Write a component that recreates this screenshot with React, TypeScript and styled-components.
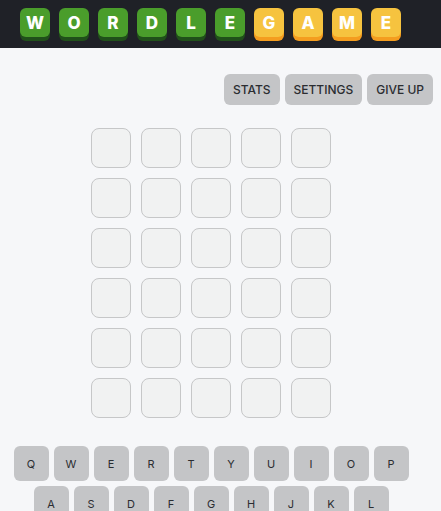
import React from "react";
import styled, { createGlobalStyle } from "styled-components";

const Global = createGlobalStyle`
  html, body { margin: 0; padding: 0; background: #f6f7f9; }
  body { font-family: Inter, "Noto Sans", sans-serif; }
`;

const Header = styled.header`
  height: 48px;
  background: #1f2127;
  display: flex;
  align-items: flex-start;
  gap: 9px;
  padding: 8px 0 0 20px;
  box-sizing: border-box;
`;

const LogoTile = styled.div<{ $yellow?: boolean }>`
  width: 30px;
  height: 29px;
  border-radius: 6px;
  background: ${(p) => (p.$yellow ? "#f6c33f" : "#4a9d2b")};
  box-shadow: 0 4px 0 ${(p) => (p.$yellow ? "#f49d1f" : "#20501a")};
  color: #fff;
  font-weight: 800;
  font-size: 17px;
  display: flex;
  align-items: center;
  justify-content: center;
`;

const Main = styled.main`
  padding-top: 26px;
`;

const Toolbar = styled.div`
  display: flex;
  justify-content: flex-end;
  gap: 5px;
  padding-right: 8px;
`;

const ToolButton = styled.button`
  height: 31px;
  padding: 0 9px;
  border: none;
  border-radius: 6px;
  background: #c4c5c7;
  color: #2b2d31;
  font-family: Inter, "Noto Sans", sans-serif;
  font-size: 12px;
  font-weight: 500;
`;

const Column = styled.div`
  width: 422px;
  display: flex;
  flex-direction: column;
  align-items: center;
`;

const Board = styled.div`
  margin-top: 23px;
  display: grid;
  grid-template-columns: repeat(5, 40px);
  grid-auto-rows: 40px;
  gap: 10px;
`;

const Cell = styled.div`
  box-sizing: border-box;
  border: 1px solid #c6c7c8;
  border-radius: 8px;
  background: #f1f2f2;
`;

const Keyboard = styled.div`
  margin-top: 28px;
  display: flex;
  flex-direction: column;
  align-items: center;
  gap: 5px;
`;

const KeyRow = styled.div`
  display: flex;
  gap: 5px;
`;

const Key = styled.button`
  width: 35px;
  height: 35px;
  border: none;
  border-radius: 6px;
  background: #c4c5c7;
  color: #2b2d31;
  font-family: Inter, "Noto Sans", sans-serif;
  font-size: 11px;
  font-weight: 400;
  padding: 0;
`;

const title = "WORDLEGAME".split("");
const rows = ["QWERTYUIOP", "ASDFGHJKL"];

export default function App() {
  return (
    <>
      <Global />
      <Header>
        {title.map((c, i) => (
          <LogoTile key={i} $yellow={i >= 6}>
            {c}
          </LogoTile>
        ))}
      </Header>
      <Main>
        <Toolbar>
          <ToolButton>STATS</ToolButton>
          <ToolButton>SETTINGS</ToolButton>
          <ToolButton>GIVE UP</ToolButton>
        </Toolbar>
        <Column>
          <Board>
            {Array.from({ length: 30 }).map((_, i) => (
              <Cell key={i} />
            ))}
          </Board>
          <Keyboard>
            {rows.map((r) => (
              <KeyRow key={r}>
                {r.split("").map((k) => (
                  <Key key={k}>{k}</Key>
                ))}
              </KeyRow>
            ))}
          </Keyboard>
        </Column>
      </Main>
    </>
  );
}
